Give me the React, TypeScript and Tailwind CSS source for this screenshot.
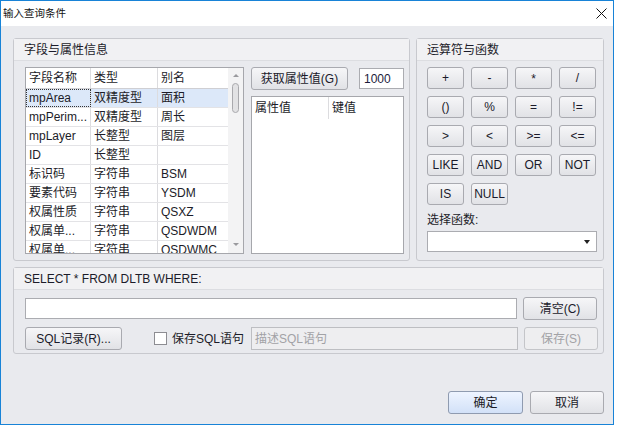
import React from "react";

const FONT = "font-[Liberation_Sans,Noto_Sans_CJK_SC,sans-serif]";

const rows: [string, string, string][] = [
  ["mpArea", "双精度型", "面积"],
  ["mpPerim...", "双精度型", "周长"],
  ["mpLayer", "长整型", "图层"],
  ["ID", "长整型", ""],
  ["标识码", "字符串", "BSM"],
  ["要素代码", "字符串", "YSDM"],
  ["权属性质", "字符串", "QSXZ"],
  ["权属单...", "字符串", "QSDWDM"],
  ["权属单...", "字符串", "QSDWMC"],
];

const ops = ["+", "-", "*", "/", "()", "%", "=", "!=", ">", "<", ">=", "<=", "LIKE", "AND", "OR", "NOT", "IS", "NULL"];

function Btn({
  children,
  className = "",
  disabled = false,
  primary = false,
}: {
  children: React.ReactNode;
  className?: string;
  disabled?: boolean;
  primary?: boolean;
}) {
  const bg = disabled
    ? "bg-[#eeeef0] border-[#c4c5c9] text-[#a2a2a6]"
    : primary
    ? "bg-gradient-to-b from-[#eef4ff] to-[#d2e1f8] border-[#8f9bb0] text-[#1a1a24]"
    : "bg-gradient-to-b from-[#f6f6f8] to-[#e1e2e6] border-[#a9aab0] text-[#1a1a2a]";
  return (
    <div className={`flex shrink-0 items-center justify-center whitespace-nowrap rounded-[3px] border text-[12px] leading-none ${bg} ${className}`}>
      {children}
    </div>
  );
}

function Group({
  title,
  className = "",
  children,
}: {
  title: string;
  className?: string;
  children: React.ReactNode;
}) {
  return (
    <div className={`flex flex-col rounded-[3px] border border-[#c8c9ce] ${className}`}>
      <div className="flex h-[22px] shrink-0 items-center border-b border-[#dcdde1] bg-[#f1f1f3] px-[10px] text-[12px] text-[#1c1c2a]">
        {title}
      </div>
      {children}
    </div>
  );
}

function Scrollbar() {
  return (
    <div className="flex w-[15px] shrink-0 flex-col items-center bg-[#f3f3f4]">
      <div className="mt-[6px] h-0 w-0 border-x-[3px] border-b-[3px] border-x-transparent border-b-[#9a9a9e]" />
      <div className="mt-[6px] h-[30px] w-[7px] rounded-full border border-[#a9a9ad] bg-[#e2e2e4]" />
      <div className="flex-1" />
      <div className="mb-[7px] h-0 w-0 border-x-[3px] border-t-[3px] border-x-transparent border-t-[#9a9a9e]" />
    </div>
  );
}

export default function App() {
  return (
    <div className={`h-[426px] w-[617px] bg-white ${FONT}`}>
      <div className="flex h-[425px] w-[614px] flex-col border border-[#1883d7] bg-[#e9eaee]">
        {/* title bar */}
        <div className="flex h-[25px] shrink-0 items-center justify-between bg-white pl-[2px] pr-[6px]">
          <span className="text-[10.5px] text-[#111]">输入查询条件</span>
          <svg width="11" height="11" viewBox="0 0 11 11" className="mb-[1px]">
            <path d="M0.5 0.5 L10.5 10.5 M10.5 0.5 L0.5 10.5" stroke="#111" strokeWidth="1" />
          </svg>
        </div>

        <div className="flex flex-1 flex-col pl-[12px] pr-[9px] pt-[12px]">
          <div className="flex h-[223px] gap-[6px]">
            {/* fields group */}
            <Group title="字段与属性信息" className="w-[397px]">
              <div className="flex gap-[7px] pl-[11px] pt-[6px]">
                <div className="flex h-[187px] w-[219px] border border-[#a6a7ac] bg-white text-[12px] text-[#1c1c28]">
                  <div className="flex flex-1 flex-col overflow-hidden">
                    <div className="flex h-[21px] shrink-0 border-b border-[#cfcfd3]">
                      <div className="flex w-[65px] items-center border-r border-[#dcdcdf] pl-[3px]">字段名称</div>
                      <div className="flex w-[67px] items-center border-r border-[#dcdcdf] pl-[3px]">类型</div>
                      <div className="flex flex-1 items-center pl-[3px]">别名</div>
                    </div>
                    {rows.map((r, i) => (
                      <div
                        key={i}
                        className={`flex h-[19px] shrink-0 border-b border-[#e3e3e6] ${i === 0 ? "bg-[#dce8f9]" : ""}`}
                      >
                        <div
                          className={`flex w-[65px] items-center whitespace-nowrap border-r border-[#dcdcdf] pl-[3px] ${
                            i === 0 ? "outline outline-1 -outline-offset-1 outline-dotted outline-[#333]" : ""
                          }`}
                        >
                          {r[0]}
                        </div>
                        <div className="flex w-[67px] items-center border-r border-[#dcdcdf] pl-[3px]">{r[1]}</div>
                        <div className="flex flex-1 items-center pl-[3px]">{r[2]}</div>
                      </div>
                    ))}
                  </div>
                  <Scrollbar />
                </div>

                <div className="flex w-[153px] flex-col">
                  <div className="flex h-[23px] items-center justify-between">
                    <Btn className="h-[23px] w-[97px]">获取属性值(G)</Btn>
                    <div className="flex h-[21px] w-[45px] items-center border border-[#abacb1] bg-white pl-[4px] text-[12px] text-[#1c1c3c]">
                      1000
                    </div>
                  </div>
                  <div className="mt-[6px] flex h-[158px] flex-col border border-[#a6a7ac] bg-white text-[12px] text-[#1c1c28]">
                    <div className="flex h-[22px] shrink-0">
                      <div className="flex w-[77px] items-center border-r border-[#dcdcdf] pl-[3px]">属性值</div>
                      <div className="flex flex-1 items-center pl-[3px]">键值</div>
                    </div>
                  </div>
                </div>
              </div>
            </Group>

            {/* operators group */}
            <Group title="运算符与函数" className="w-[188px]">
              <div className="flex flex-col px-[10px] pt-[6px]">
                <div className="grid grid-cols-[repeat(4,37px)] gap-x-[7px] gap-y-[7px]">
                  {ops.map((o) => (
                    <Btn key={o} className={`h-[22px] ${o === "*" ? "items-start pt-[5px]" : ""}`}>
                      {o}
                    </Btn>
                  ))}
                </div>
                <div className="mt-[8px] text-[12px] leading-[14px] text-[#1c1c28]">选择函数:</div>
                <div className="mt-[4px] flex h-[21px] w-[170px] items-center justify-end border border-[#abacb1] bg-white pr-[6px]">
                  <div className="h-0 w-0 border-x-[3px] border-t-[4px] border-x-transparent border-t-[#222]" />
                </div>
              </div>
            </Group>
          </div>

          {/* SQL group */}
          <Group title="SELECT * FROM DLTB WHERE:" className="mt-[6px] h-[87px]">
            <div className="flex flex-col gap-[7px] pl-[11px] pr-[6px] pt-[7px]">
              <div className="flex items-center gap-[6px]">
                <div className="h-[21px] w-[492px] border border-[#abacb1] bg-white" />
                <Btn className="h-[23px] w-[74px]">清空(C)</Btn>
              </div>
              <div className="flex items-center">
                <Btn className="h-[23px] w-[97px]">SQL记录(R)...</Btn>
                <div className="ml-[32px] h-[13px] w-[13px] shrink-0 border border-[#8d8d92] bg-white" />
                <span className="ml-[5px] shrink-0 whitespace-nowrap text-[12px] text-[#1c1c28]">保存SQL语句</span>
                <div className="ml-[7px] flex h-[23px] w-[267px] shrink-0 items-center border border-[#bdbec2] bg-[#eeeef0] pl-[3px] text-[12px] text-[#a2a2a6]">
                  描述SQL语句
                </div>
                <Btn disabled className="ml-[6px] h-[23px] w-[74px]">
                  保存(S)
                </Btn>
              </div>
            </div>
          </Group>

          <div className="mt-[37px] flex justify-end gap-[7px]">
            <Btn primary className="h-[23px] w-[75px]">
              确定
            </Btn>
            <Btn className="h-[23px] w-[74px]">取消</Btn>
          </div>
        </div>
      </div>
    </div>
  );
}
